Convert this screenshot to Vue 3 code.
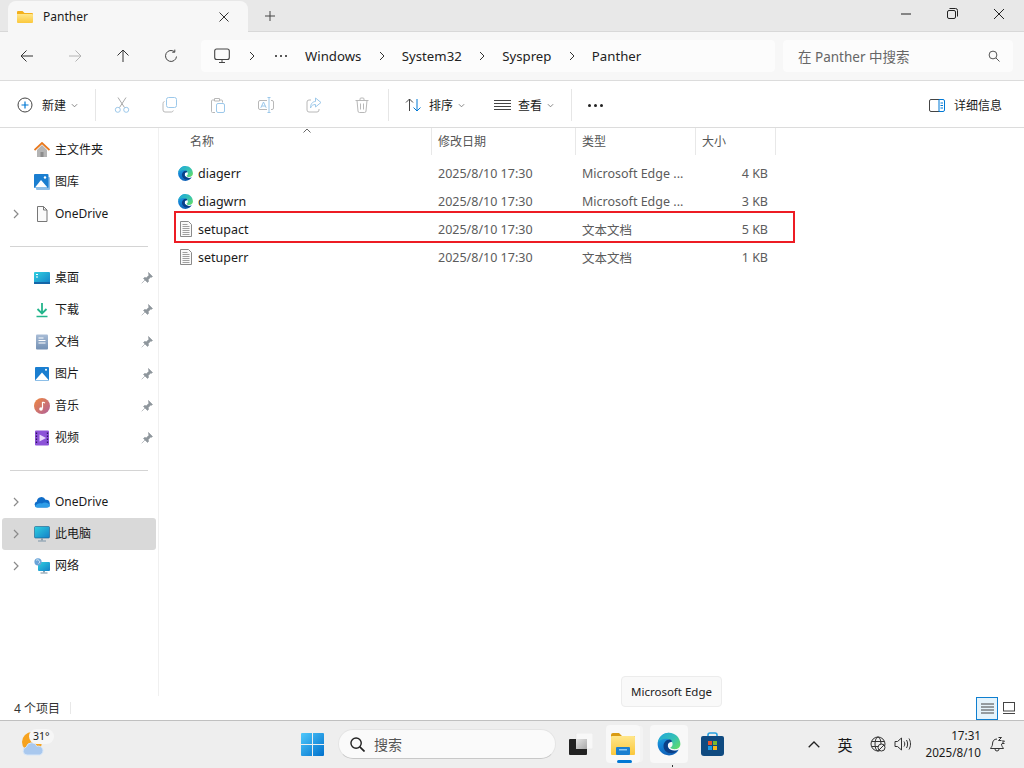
<template>
  <div class="desktop">
    <!-- shared gradients -->
    <svg class="defs" width="0" height="0">
      <defs>
        <linearGradient id="edgeBody" x1="0" y1="0" x2="0.3" y2="1">
          <stop offset="0" stop-color="#2bb3d8" />
          <stop offset="0.55" stop-color="#1483d6" />
          <stop offset="1" stop-color="#0f62b8" />
        </linearGradient>
        <linearGradient id="edgeTop" x1="0" y1="0" x2="1" y2="0.8">
          <stop offset="0" stop-color="#1fa7dc" />
          <stop offset="0.6" stop-color="#35c1b5" />
          <stop offset="1" stop-color="#5fdb6c" />
        </linearGradient>
        <linearGradient id="folderFill" x1="0" y1="0" x2="0" y2="1">
          <stop offset="0" stop-color="#ffe68a" />
          <stop offset="1" stop-color="#fbc83c" />
        </linearGradient>
        <linearGradient id="startFill" x1="0" y1="0" x2="1" y2="1">
          <stop offset="0" stop-color="#4fc8fb" />
          <stop offset="1" stop-color="#0070cc" />
        </linearGradient>
        <linearGradient id="screenFill" x1="0" y1="0" x2="1" y2="1">
          <stop offset="0" stop-color="#2fd0e0" />
          <stop offset="1" stop-color="#1480c8" />
        </linearGradient>
        <linearGradient id="musicFill" x1="0" y1="0" x2="1" y2="1">
          <stop offset="0" stop-color="#f0883c" />
          <stop offset="1" stop-color="#b0609c" />
        </linearGradient>
        <linearGradient id="docFill" x1="0" y1="0" x2="0" y2="1">
          <stop offset="0" stop-color="#a8bcd6" />
          <stop offset="1" stop-color="#7390b4" />
        </linearGradient>
        <linearGradient id="overlapFill" x1="0" y1="0" x2="1" y2="1">
          <stop offset="0" stop-color="#e4e4e4" />
          <stop offset="1" stop-color="#a8a8a8" />
        </linearGradient>
      </defs>
    </svg>

    <!-- title bar with tab -->
    <div class="titlebar">
      <div class="tab">
        <svg class="tab-folder" viewBox="0 0 16 14" width="16" height="14">
          <path d="M0 2a1 1 0 0 1 1-1h4.500l2 2H15a1 1 0 0 1 1 1v1H0z" fill="#f3b01c" />
          <path d="M0 4h15a1 1 0 0 1 1 1v7a1 1 0 0 1-1 1H1a1 1 0 0 1-1-1z" fill="url(#folderFill)" />
        </svg>
        <span class="tab-title">Panther</span>
        <svg class="tab-close" viewBox="0 0 10 10" width="10" height="10">
          <path d="M.5.5l9 9M9.500.5l-9 9" stroke="#333" fill="none" />
        </svg>
      </div>
      <svg class="tab-plus" viewBox="0 0 10 10" width="10" height="10">
        <path d="M5 0v10M0 5h10" stroke="#444" fill="none" />
      </svg>
      <div class="win-controls">
        <svg viewBox="0 0 10 10" width="10" height="10"><path d="M0 5h10" stroke="#222" fill="none" /></svg>
        <svg viewBox="0 0 11 11" width="11" height="11">
          <rect x=".5" y="2.500" width="8" height="8" rx="1.500" stroke="#222" fill="none" />
          <path d="M2.500.5h6a2 2 0 0 1 2 2v6" stroke="#222" fill="none" />
        </svg>
        <svg viewBox="0 0 10 10" width="10" height="10"><path d="M0 0l10 10M10 0L0 10" stroke="#222" fill="none" /></svg>
      </div>
    </div>

    <!-- address bar -->
    <div class="addressbar">
      <div class="nav-buttons">
        <svg viewBox="0 0 14 14" width="14" height="14"><path d="M13 7H1M6.500 1.500L1 7l5.500 5.500" stroke="#333" fill="none" /></svg>
        <svg viewBox="0 0 14 14" width="14" height="14"><path d="M1 7h12M7.500 1.500L13 7l-5.500 5.500" stroke="#b4b4b4" fill="none" /></svg>
        <svg viewBox="0 0 14 14" width="14" height="14"><path d="M7 13V1M1.500 6.500L7 1l5.500 5.500" stroke="#333" fill="none" /></svg>
        <svg viewBox="0 0 14 14" width="14" height="14"><path d="M12.500 7.500a5.500 5.500 0 1 1-2-4.800M10.800.6v2.600H8.200" stroke="#444" fill="none" /></svg>
      </div>
      <div class="breadcrumb">
        <svg class="pc-icon" viewBox="0 0 16 16" width="16" height="16">
          <rect x=".7" y="1" width="14.600" height="10.500" rx="2" stroke="#444" fill="none" stroke-width="1.100" />
          <path d="M8 11.500V14M5 14.500h6" stroke="#444" fill="none" />
        </svg>
        <span class="crumb-sep first-sep"><svg viewBox="0 0 6 10" width="6" height="10"><path d="M1 1l4 4-4 4" stroke="#333" fill="none" /></svg></span>
        <span class="crumb-dots"><i></i><i></i><i></i></span>
        <template v-for="(crumb, i) in crumbs" :key="crumb">
          <span class="crumb">{{ crumb }}</span>
          <span v-if="i < crumbs.length - 1" class="crumb-sep"><svg viewBox="0 0 6 10" width="6" height="10"><path d="M1 1l4 4-4 4" stroke="#333" fill="none" /></svg></span>
        </template>
      </div>
      <div class="searchbox">
        <span>在 Panther 中搜索</span>
        <svg viewBox="0 0 12 12" width="12" height="12">
          <circle cx="5" cy="5" r="3.900" stroke="#555" fill="none" />
          <path d="M8 8l3.500 3.500" stroke="#555" fill="none" />
        </svg>
      </div>
    </div>

    <!-- command bar -->
    <div class="toolbar">
      <div class="tool-new">
        <svg viewBox="0 0 16 16" width="16" height="16">
          <circle cx="8" cy="8" r="7" stroke="#444" fill="none" />
          <path d="M8 4.500v7M4.500 8h7" stroke="#0078d4" fill="none" stroke-width="1.200" />
        </svg>
        <span>新建</span>
        <svg class="caret" viewBox="0 0 8 5" width="7" height="5"><path d="M1 1l3 3 3-3" stroke="#777" fill="none" /></svg>
      </div>
      <div class="tool-sep"></div>
      <div class="tool-icons">
        <svg viewBox="0 0 16 16" width="16" height="16"><path d="M4 .5l6.500 10M12 .5L5.500 10.500" stroke="#a8a8a8" fill="none" /><circle cx="3.800" cy="12.800" r="2.500" stroke="#9cc8ea" fill="none" /><circle cx="12.200" cy="12.800" r="2.500" stroke="#9cc8ea" fill="none" /></svg>
        <svg viewBox="0 0 16 16" width="16" height="16"><rect x="4.500" y=".5" width="10" height="10" rx="2" stroke="#9cc8ea" fill="none" /><path d="M2.500 4.500A2 2 0 0 0 1 6.500v6.500a2 2 0 0 0 2 2h6.500a2 2 0 0 0 1.800-1.500" stroke="#b8b8b8" fill="none" /></svg>
        <svg viewBox="0 0 16 16" width="16" height="16"><path d="M4 3H2.500a1 1 0 0 0-1 1v10.500a1 1 0 0 0 1 1H5M10 3h1.500a1 1 0 0 1 1 1v1.500M4.500 1.500h5v2.500h-5z" stroke="#b8b8b8" fill="none" /><rect x="6.500" y="6.500" width="8" height="9" rx="1.500" stroke="#9cc8ea" fill="none" /></svg>
        <svg viewBox="0 0 16 16" width="16" height="16"><path d="M9 3.500H2A1.500 1.500 0 0 0 .5 5v6A1.500 1.500 0 0 0 2 12.500h7M13 3.500h1A1.500 1.500 0 0 1 15.500 5v6a1.500 1.500 0 0 1-1.500 1.500h-1" stroke="#b8b8b8" fill="none" /><path d="M11 1v14M9.500.5h3M9.500 15.500h3" stroke="#9cc8ea" fill="none" /><path d="M2.800 10.800L5.500 5l2.700 5.800M3.800 9h3.400" stroke="#9cc8ea" fill="none" /></svg>
        <svg viewBox="0 0 16 16" width="16" height="16"><path d="M5 3H3a2 2 0 0 0-2 2v8a2 2 0 0 0 2 2h8a2 2 0 0 0 2-2v-1" stroke="#b8b8b8" fill="none" /><path d="M9.500 1l5.500 4.500-5.500 4.500V7.500C7 7.500 5.500 8.500 4.500 11c0-4 2-6.500 5-6.500z" stroke="#9cc8ea" fill="none" /></svg>
        <svg viewBox="0 0 16 16" width="16" height="16"><path d="M1.500 3.500h13M6 3.500V2a1 1 0 0 1 1-1h2a1 1 0 0 1 1 1v1.500M3 3.500l1 10.500a1.500 1.500 0 0 0 1.500 1.500h5A1.500 1.500 0 0 0 12 14l1-10.500M6.500 6.500v6M9.500 6.500v6" stroke="#b8b8b8" fill="none" /></svg>
      </div>
      <div class="tool-sep"></div>
      <div class="tool-sort">
        <svg viewBox="0 0 17 14" width="17" height="14"><path d="M4.500 13V1M1 4.500L4.500 1 8 4.500" stroke="#444" fill="none" /><path d="M12 1v12M8.500 9.500L12 13l3.500-3.500" stroke="#0078d4" fill="none" /></svg>
        <span>排序</span>
        <svg class="caret" viewBox="0 0 8 5" width="7" height="5"><path d="M1 1l3 3 3-3" stroke="#777" fill="none" /></svg>
      </div>
      <div class="tool-view">
        <svg viewBox="0 0 17 12" width="17" height="12"><path d="M0 1.500h17M0 4.500h17M0 7.500h17M0 10.500h17" stroke="#444" fill="none" /></svg>
        <span>查看</span>
        <svg class="caret" viewBox="0 0 8 5" width="7" height="5"><path d="M1 1l3 3 3-3" stroke="#777" fill="none" /></svg>
      </div>
      <div class="tool-sep"></div>
      <div class="tool-more"><i></i><i></i><i></i></div>
      <div class="tool-details">
        <svg viewBox="0 0 16 13" width="16" height="13">
          <path d="M10 .5H2A1.500 1.500 0 0 0 .5 2v9A1.500 1.500 0 0 0 2 12.500h8" stroke="#444" fill="none" />
          <path d="M10 .5h4A1.500 1.500 0 0 1 15.500 2v9a1.500 1.500 0 0 1-1.500 1.500h-4zM11.500 4h2.500M11.500 6.500h2.500M11.500 9h2.500" stroke="#0078d4" fill="none" />
        </svg>
        <span>详细信息</span>
      </div>
    </div>

    <div class="main">
      <!-- navigation pane -->
      <nav class="sidebar">
        <template v-for="(item, i) in navItems" :key="i">
          <div v-if="item.divider" class="nav-divider"><div></div></div>
          <div v-else class="nav-row" :class="{ selected: item.selected }">
            <span class="nav-chevron">
              <svg v-if="item.chevron" viewBox="0 0 6 10" width="6" height="10"><path d="M1 1l4 4-4 4" stroke="#8a8a8a" fill="none" stroke-width="1.200" /></svg>
            </span>
            <svg class="nav-icon" viewBox="0 0 16 16" width="16" height="16">
              <template v-if="item.icon === 'home'">
                <path d="M3 8v7h10V8L8 3z" fill="#b4b4b4" />
                <rect x="6.500" y="10" width="3" height="5" fill="#8c8c8c" />
                <path d="M.5 8L8 1l7.500 7" stroke="#e8791e" stroke-width="1.800" fill="none" />
              </template>
              <template v-else-if="item.icon === 'gallery'">
                <rect x="2" y="3" width="14" height="13" rx="1" fill="#8fbfe8" />
                <rect x="0" y="0" width="14.500" height="14" rx="1" fill="#1a7ed0" />
                <path d="M1 13.500L7 6l6.500 7.500z" fill="#fff" />
                <circle cx="11" cy="3.500" r="1.200" fill="#fff" />
              </template>
              <template v-else-if="item.icon === 'page'">
                <path d="M3.500.5h6l3.500 3.500v11.500h-9.500z" fill="#fafafa" stroke="#777" />
                <path d="M9.500.5V4H13" fill="none" stroke="#777" />
              </template>
              <template v-else-if="item.icon === 'desktop'">
                <rect x="0" y="2" width="16" height="12" rx="1" fill="url(#screenFill)" />
                <rect x="0" y="12" width="16" height="2" fill="#1566a8" />
                <path d="M2 4.500h2M2 7h2" stroke="#fff" stroke-width="1.200" />
              </template>
              <template v-else-if="item.icon === 'download'">
                <path d="M8 1v10M3.500 7L8 11.500 12.500 7" stroke="#24b58c" stroke-width="1.800" fill="none" />
                <path d="M2.500 14.500h11" stroke="#24b58c" stroke-width="1.500" />
              </template>
              <template v-else-if="item.icon === 'doc'">
                <rect x="2" y="0.500" width="12" height="15" rx="1" fill="url(#docFill)" />
                <path d="M4.500 4h5M4.500 6.500h7M4.500 9h7" stroke="#fff" />
              </template>
              <template v-else-if="item.icon === 'pictures'">
                <rect x="1" y="1" width="14" height="14" rx="1" fill="#1a7ed0" />
                <path d="M1 14.500L8 6.500l7 8z" fill="#fff" />
                <circle cx="12" cy="3.800" r="1" fill="#fff" />
              </template>
              <template v-else-if="item.icon === 'music'">
                <circle cx="8" cy="8" r="8" fill="url(#musicFill)" />
                <path d="M8.500 4v6.500" stroke="#fff" stroke-width="1.200" />
                <circle cx="7" cy="11" r="1.800" fill="#fff" />
                <path d="M8.500 4l2.500 1" stroke="#fff" stroke-width="1.200" />
              </template>
              <template v-else-if="item.icon === 'video'">
                <rect x="1" y="0.500" width="14" height="15" rx="1" fill="#8c52d8" />
                <path d="M5.500 4.500L12 8l-6.500 3.500z" fill="#e8d8fa" />
                <path d="M2.500 2.500v11M13.500 2.500v11" stroke="#2e1560" stroke-width="1.300" stroke-dasharray="1.500 1.500" />
              </template>
              <template v-else-if="item.icon === 'cloud'">
                <path d="M3.500 13.500a3 3 0 0 1-.6-5.900A4.500 4.500 0 0 1 11.500 5.800a3.800 3.800 0 0 1 .8 7.700z" fill="#0f6cc8" />
                <path d="M1 12.500C2 10 5 8.500 8 9.500c2-1.500 6-1.500 8 2 0 1-1 2-2.500 2h-10C2 13.500 1.300 13 1 12.500z" fill="#2f9ee8" />
              </template>
              <template v-else-if="item.icon === 'pc'">
                <rect x="0.500" y="0.500" width="15" height="11.500" rx="1" fill="url(#screenFill)" stroke="#1a5d8c" stroke-width=".6" />
                <rect x="7" y="12" width="2" height="2.500" fill="#8aa0b0" />
                <path d="M4 15h8" stroke="#8aa0b0" stroke-width="1.200" />
              </template>
              <template v-else-if="item.icon === 'network'">
                <rect x="4" y="4" width="12" height="9" rx="1" fill="url(#screenFill)" />
                <rect x="9" y="13" width="2" height="1.500" fill="#8aa0b0" />
                <path d="M6.500 15h7" stroke="#8aa0b0" stroke-width="1.200" />
                <circle cx="4" cy="3.800" r="3.600" fill="#6aa4d8" />
                <path d="M2 2.500c1-1 2-1 3 0s1 2-.5 3" stroke="#d8eaf8" fill="none" />
              </template>
            </svg>
            <span class="nav-label">{{ item.label }}</span>
            <svg v-if="item.pinned" class="nav-pin" viewBox="0 0 12 12" width="12" height="12">
              <path d="M7.500.5l4 4-1 .8-.8-.2-2.400 2.400.2 2-1 1L2.500 6.500l1-1 2 .2 2.400-2.400-.2-.8zM4 8L.7 11.300" fill="#8e969c" stroke="#8e969c" stroke-width=".6" />
            </svg>
          </div>
        </template>
      </nav>

      <!-- file list -->
      <section class="files">
        <div class="file-head">
          <div class="head-cell head-name">名称</div>
          <div class="head-cell">修改日期</div>
          <div class="head-cell">类型</div>
          <div class="head-cell">大小</div>
          <svg class="sort-caret" viewBox="0 0 8 5" width="8" height="5"><path d="M.5 4.500L4 1l3.500 3.500" stroke="#666" fill="none" /></svg>
        </div>
        <div class="file-body">
          <div v-for="file in files" :key="file.name" class="file-row">
            <div class="cell-name">
              <svg v-if="file.kind === 'edge'" class="edge-file" viewBox="0 0 16 16" width="17" height="17">
                <path d="M8 1a7 7 0 0 0 0 14c2.600 0 4.900-1.400 6-3.600-1.600 1-3.600 1-5.100.2-1.400-.8-2-2.200-1.500-3.600.3-1 1.300-1.500 2.300-1.200z" fill="url(#edgeBody)" />
                <path d="M1.200 6.800C1.900 3.500 4.700 1 8 1c3.900 0 7 3.100 7 7 0 2.200-1.800 3.200-3.500 3.200-1.300 0-2.300-.4-2.800-.9 1-.5 1.500-1.300 1.500-2.300C10.200 6.400 8.600 4.800 6 4.800c-2 0-3.700.8-4.800 2z" fill="url(#edgeTop)" />
                <path d="M4.600 9.500C4.600 7 6.300 5.300 8.500 5.300c.8 0 1.200.5 1.200 1.500-1-.3-2 .2-2.300 1.200-.5 1.400.1 2.800 1.500 3.600 1.300.7 3.100.8 4.400.3-1.200 1.400-3 1.900-4.500 1.700-2.400-.3-4.200-2-4.200-4.600z" fill="#0b3f87" />
              </svg>
              <svg v-else viewBox="0 0 16 16" width="16" height="16">
                <path d="M2.500.5h8l3 3v12h-11z" fill="#fafafa" stroke="#8a8a8a" />
                <path d="M4.500 3.500h5M4.500 5.500h7M4.500 7.500h7M4.500 9.500h7M4.500 11.500h7M4.500 13.500h7" stroke="#a0a0a0" />
              </svg>
              <span>{{ file.name }}</span>
            </div>
            <div class="cell-meta">{{ file.date }}</div>
            <div class="cell-meta">{{ file.type }}</div>
            <div class="cell-meta cell-size">{{ file.size }}</div>
          </div>
          <!-- red annotation round the third row -->
          <div class="highlight"></div>
        </div>
      </section>
    </div>

    <!-- status bar -->
    <div class="statusbar">
      <span class="item-count">4 个项目</span>
      <div class="status-sep"></div>
      <div class="view-toggle">
        <div class="view-btn active">
          <svg viewBox="0 0 13 11" width="13" height="11"><path d="M0 1h13M0 4h13M0 7h13M0 10h13" stroke="#444" fill="none" /></svg>
        </div>
        <div class="view-btn">
          <svg viewBox="0 0 13 12" width="13" height="12"><rect x=".5" y=".5" width="11" height="8.500" stroke="#444" fill="none" /><path d="M0 11.500h12" stroke="#444" /></svg>
        </div>
      </div>
    </div>

    <!-- taskbar -->
    <div class="taskbar">
      <div class="weather">
        <svg viewBox="0 0 23 24" width="23" height="24">
          <circle cx="10" cy="10" r="10" fill="#f6a21e" />
          <path d="M5 23a4 4 0 0 1-.7-7.900 5.500 5.500 0 0 1 10.500-.7A4.300 4.300 0 0 1 18 23z" fill="#a9c8ee" stroke="#d6e6f8" />
        </svg>
        <span class="temp">31°</span>
      </div>
      <svg class="start" viewBox="0 0 23 23" width="23" height="23">
        <path d="M0 1a1 1 0 0 1 1-1h10v11H0zM12 0h10a1 1 0 0 1 1 1v10H12zM0 12h11v11H1a1 1 0 0 1-1-1zM12 12h11v10a1 1 0 0 1-1 1H12z" fill="url(#startFill)" />
      </svg>
      <div class="task-search">
        <svg viewBox="0 0 16 16" width="15" height="15">
          <circle cx="6.500" cy="6.500" r="5.500" stroke="#222" stroke-width="1.500" fill="none" />
          <path d="M10.500 10.500l5 5" stroke="#222" stroke-width="1.800" />
        </svg>
        <span>搜索</span>
      </div>
      <svg class="taskview" viewBox="0 0 24 22" width="24" height="22">
        <rect x="7" y="0" width="17" height="16" rx="1" fill="#f8f8f8" stroke="#e2e2e2" stroke-width=".5" />
        <rect x="0" y="6" width="18" height="16" rx="1" fill="#222" />
        <rect x="7" y="6" width="11" height="10" fill="url(#overlapFill)" />
      </svg>
      <div class="task-btn explorer">
        <svg viewBox="0 0 24 22" width="24" height="22">
          <path d="M0 2a2 2 0 0 1 2-2h6l3 3h12a1 1 0 0 1 1 1v2H0z" fill="#d99a12" />
          <rect x="0" y="3" width="24" height="19" rx="1" fill="url(#folderFill)" />
          <rect x="5" y="14" width="14" height="8" rx="1" fill="#1a7fd0" />
          <rect x="8" y="16" width="8" height="1.500" fill="#8cc8f0" />
        </svg>
        <div class="running"></div>
      </div>
      <div class="task-btn edge">
        <svg viewBox="0 0 16 16" width="26" height="26">
          <path d="M8 1a7 7 0 0 0 0 14c2.600 0 4.900-1.400 6-3.600-1.600 1-3.600 1-5.100.2-1.400-.8-2-2.200-1.500-3.600.3-1 1.300-1.500 2.300-1.200z" fill="url(#edgeBody)" />
          <path d="M1.200 6.800C1.900 3.500 4.700 1 8 1c3.900 0 7 3.100 7 7 0 2.200-1.800 3.200-3.500 3.200-1.300 0-2.300-.4-2.800-.9 1-.5 1.500-1.300 1.500-2.300C10.200 6.400 8.600 4.800 6 4.800c-2 0-3.700.8-4.800 2z" fill="url(#edgeTop)" />
          <path d="M4.600 9.500C4.600 7 6.300 5.300 8.500 5.300c.8 0 1.200.5 1.200 1.500-1-.3-2 .2-2.300 1.200-.5 1.400.1 2.800 1.500 3.600 1.300.7 3.100.8 4.400.3-1.200 1.400-3 1.900-4.500 1.700-2.400-.3-4.200-2-4.200-4.600z" fill="#0b3f87" />
        </svg>
        <div class="pointer-tip"></div>
      </div>
      <svg class="store" viewBox="0 0 23 24" width="23" height="24">
        <path d="M7 5V3a2 2 0 0 1 2-2h5a2 2 0 0 1 2 2v2" stroke="#27a0e0" stroke-width="1.600" fill="none" />
        <path d="M0 6a2 2 0 0 1 2-2h19a2 2 0 0 1 2 2v15a3 3 0 0 1-3 3H3a3 3 0 0 1-3-3z" fill="#0f4a80" />
        <rect x="7" y="9" width="4" height="4" fill="#e8532b" />
        <rect x="12" y="9" width="4" height="4" fill="#7ab82e" />
        <rect x="7" y="14" width="4" height="4" fill="#1c9ce8" />
        <rect x="12" y="14" width="4" height="4" fill="#f8b818" />
      </svg>
      <div class="tray">
        <svg class="tray-up" viewBox="0 0 12 7" width="12" height="7"><path d="M.7 6.300L6 1l5.300 5.300" stroke="#222" stroke-width="1.300" fill="none" /></svg>
        <span class="ime">英</span>
        <svg class="tray-globe" viewBox="0 0 16 16" width="16" height="16">
          <circle cx="8" cy="8" r="7" stroke="#333" fill="none" />
          <ellipse cx="8" cy="8" rx="3" ry="7" stroke="#333" fill="none" />
          <path d="M1.500 5.500h13M1.500 10.500h8" stroke="#333" fill="none" />
          <circle cx="11.500" cy="11.500" r="3.500" fill="#eee" stroke="#333" />
          <path d="M9 14l5-5" stroke="#333" />
        </svg>
        <svg class="tray-sound" viewBox="0 0 17 14" width="17" height="14">
          <path d="M1 4.500h2.500L7.500 1v12L3.500 9.500H1z" stroke="#333" fill="none" />
          <path d="M10 4.500c1 1.500 1 3.500 0 5M12.500 3c1.500 2.500 1.500 5.500 0 8M15 1.500c2 3.500 2 7.500 0 11" stroke="#333" fill="none" />
        </svg>
        <div class="clock">
          <div>17:31</div>
          <div>2025/8/10</div>
        </div>
        <svg class="tray-bell" viewBox="0 0 16 17" width="16" height="17">
          <path d="M8 3C5 3 3.500 5 3.500 8c0 2-1.200 3-2 4.500h13C13.700 11 12.500 10 12.500 8" stroke="#333" fill="none" />
          <path d="M6 13a2 2 0 0 0 4 0" stroke="#333" fill="none" />
          <path d="M9.500 1.500h3l-3 3h3M13 5h2.500L13 7.500h2.500" stroke="#333" fill="none" />
        </svg>
      </div>
    </div>

    <!-- taskbar hover tooltip -->
    <div class="tooltip">Microsoft Edge</div>
  </div>
</template>

<script setup>
const crumbs = ['Windows', 'System32', 'Sysprep', 'Panther']

const navItems = [
  { label: '主文件夹', icon: 'home' },
  { label: '图库', icon: 'gallery' },
  { label: 'OneDrive', icon: 'page', chevron: true },
  { divider: true },
  { label: '桌面', icon: 'desktop', pinned: true },
  { label: '下载', icon: 'download', pinned: true },
  { label: '文档', icon: 'doc', pinned: true },
  { label: '图片', icon: 'pictures', pinned: true },
  { label: '音乐', icon: 'music', pinned: true },
  { label: '视频', icon: 'video', pinned: true },
  { divider: true },
  { label: 'OneDrive', icon: 'cloud', chevron: true },
  { label: '此电脑', icon: 'pc', chevron: true, selected: true },
  { label: '网络', icon: 'network', chevron: true },
]

const files = [
  { name: 'diagerr', kind: 'edge', date: '2025/8/10 17:30', type: 'Microsoft Edge ...', size: '4 KB' },
  { name: 'diagwrn', kind: 'edge', date: '2025/8/10 17:30', type: 'Microsoft Edge ...', size: '3 KB' },
  { name: 'setupact', kind: 'text', date: '2025/8/10 17:30', type: '文本文档', size: '5 KB' },
  { name: 'setuperr', kind: 'text', date: '2025/8/10 17:30', type: '文本文档', size: '1 KB' },
]
</script>

<style scoped>
.desktop {
  position: relative;
  width: 1024px;
  height: 768px;
  display: flex;
  flex-direction: column;
  overflow: hidden;
  background: #fff;
  color: #1a1a1a;
  font-family: "Noto Sans", "Noto Sans CJK SC", sans-serif;
  font-size: 12.5px;
}

.defs {
  display: block;
  flex: none;
}

svg {
  display: block;
  flex: none;
}

/* title bar */
.titlebar {
  height: 32px;
  flex: none;
  display: flex;
  align-items: flex-end;
  background: #e8e8e8;
  border-bottom: 1px solid #d8d8d8;
  box-sizing: border-box;
  padding-left: 8px;
}

.tab {
  width: 240px;
  height: 31px;
  margin-bottom: -1px;
  box-sizing: border-box;
  display: flex;
  align-items: center;
  padding: 0 19px 0 9px;
  background: #f7f7f7;
  border-radius: 8px 8px 0 0;
  font-size: 12px;
}

.tab-title {
  margin-left: 10px;
  flex: 1;
}

.tab-plus {
  margin: 0 0 10px 17px;
}

.win-controls {
  margin-left: auto;
  height: 31px;
  display: flex;
  align-items: center;
  gap: 36px;
  padding: 0 20px 4px 0;
  box-sizing: border-box;
}

/* address bar */
.addressbar {
  height: 49px;
  flex: none;
  display: flex;
  align-items: center;
  background: #f7f7f7;
  border-bottom: 1px solid #dcdcdc;
  box-sizing: border-box;
  padding: 0 11px 1px 20px;
}

.nav-buttons {
  display: flex;
  gap: 34px;
  width: 181px;
  flex: none;
}

.breadcrumb {
  width: 574px;
  height: 32px;
  flex: none;
  display: flex;
  align-items: center;
  background: #fcfcfc;
  border-radius: 4px;
  box-sizing: border-box;
  padding-left: 13px;
  font-size: 13.2px;
  color: #222;
}

.crumb-sep {
  width: 40.5px;
  flex: none;
  display: flex;
  justify-content: center;
}

.first-sep {
  width: 44px;
}

.crumb-dots {
  width: 31px;
  flex: none;
  display: flex;
  gap: 3px;
  padding-left: 1px;
  box-sizing: border-box;
}

.crumb-dots i {
  width: 2px;
  height: 2px;
  background: #222;
  border-radius: 50%;
}

.searchbox {
  width: 230px;
  height: 32px;
  margin-left: 8px;
  flex: none;
  display: flex;
  align-items: center;
  justify-content: space-between;
  background: #fcfcfc;
  border-radius: 4px;
  box-sizing: border-box;
  padding: 0 13px 0 15px;
  font-size: 13.5px;
  color: #666;
}

/* command bar */
.toolbar {
  height: 47px;
  flex: none;
  display: flex;
  align-items: center;
  background: #fff;
  border-bottom: 1px solid #dcdcdc;
  box-sizing: border-box;
  padding: 2px 0 0 17px;
}

.tool-new,
.tool-sort,
.tool-view,
.tool-details {
  display: flex;
  align-items: center;
}

.tool-new span,
.tool-sort span,
.tool-view span,
.tool-details span {
  font-size: 12px;
  margin-left: 9px;
}

.caret {
  margin-left: 5px;
}

.tool-new {
  width: 78px;
  flex: none;
}

.tool-sep {
  width: 1px;
  height: 32px;
  flex: none;
  background: #e6e6e6;
}

.tool-icons {
  width: 292px;
  flex: none;
  box-sizing: border-box;
  padding-left: 18px;
  display: flex;
  gap: 32px;
}

.tool-sort {
  width: 105px;
  flex: none;
  padding-left: 16px;
  box-sizing: border-box;
}

.tool-sort span {
  margin-left: 7px;
}

.tool-view {
  width: 77px;
  flex: none;
}

.tool-view span {
  margin-left: 7px;
}

.tool-more {
  margin-left: 16px;
  display: flex;
  gap: 3px;
}

.tool-more i {
  width: 3px;
  height: 3px;
  border-radius: 50%;
  background: #222;
}

.tool-details {
  margin-left: auto;
  padding-right: 22px;
}

/* main */
.main {
  flex: 1;
  min-height: 0;
  display: flex;
}

.sidebar {
  width: 159px;
  flex: none;
  box-sizing: border-box;
  border-right: 1px solid #f0f0f0;
  padding: 6px 2px 0;
}

.nav-row {
  height: 32px;
  display: flex;
  align-items: center;
  border-radius: 3px;
  padding-right: 3px;
  font-size: 12px;
}

.nav-row.selected {
  background: #d9d9d9;
}

.nav-chevron {
  width: 32px;
  flex: none;
  display: flex;
  justify-content: center;
  padding-right: 4px;
  box-sizing: border-box;
}

.nav-label {
  margin-left: 5px;
  padding-bottom: 2px;
  flex: 1;
}

.nav-divider {
  height: 32px;
  display: flex;
  align-items: center;
  padding: 0 8px;
}

.nav-divider div {
  width: 100%;
  height: 1px;
  background: #d4d4d4;
}

.files {
  flex: 1;
  min-width: 0;
}

.file-head {
  position: relative;
  height: 27px;
  display: grid;
  grid-template-columns: 273px 144px 120px 80px;
  font-size: 12px;
  color: #555;
}

.head-cell {
  display: flex;
  align-items: center;
  padding: 0 0 2px 6px;
  border-right: 1px solid #e8e8e8;
}

.head-name {
  padding-left: 31px;
}

.sort-caret {
  position: absolute;
  left: 144px;
  top: 0;
}

.file-body {
  position: relative;
  padding-top: 4px;
}

.file-row {
  height: 28px;
  display: grid;
  grid-template-columns: 272px 144px 120px 80px;
  align-items: center;
}

.cell-name {
  display: flex;
  align-items: center;
  gap: 4px;
  padding-left: 19px;
}

.edge-file {
  margin-left: -1px;
}

.cell-meta {
  padding-left: 7px;
  color: #5c5c5c;
  white-space: nowrap;
  overflow: hidden;
}

.cell-size {
  text-align: right;
  padding-right: 7px;
}

.highlight {
  position: absolute;
  left: 15px;
  top: 56px;
  width: 621px;
  height: 32px;
  box-sizing: border-box;
  border: 2px solid #ed1c24;
}

/* status bar */
.statusbar {
  height: 24px;
  flex: none;
  display: flex;
  align-items: center;
  padding-left: 14px;
  font-size: 12px;
  color: #333;
}

.status-sep {
  width: 1px;
  height: 12px;
  margin-left: 10px;
  background: #e8e8e8;
}

.view-toggle {
  margin-left: auto;
  display: flex;
  align-items: center;
  padding-right: 4px;
}

.view-btn {
  width: 22px;
  height: 23px;
  display: flex;
  align-items: center;
  justify-content: center;
  box-sizing: border-box;
}

.view-btn.active {
  background: #e5f3fb;
  border: 1px solid #0f7fd0;
}

/* taskbar */
.taskbar {
  position: relative;
  height: 48px;
  flex: none;
  display: flex;
  align-items: center;
  background: #eeeeee;
  border-top: 1px solid #c0c0c0;
  box-sizing: border-box;
  padding: 0 0 1px 22px;
}

.weather {
  position: relative;
  width: 23px;
  height: 30px;
  flex: none;
  display: flex;
  align-items: flex-end;
  padding-bottom: 3px;
  box-sizing: border-box;
}

.temp {
  position: absolute;
  left: 7px;
  top: 0;
  padding: 0 4px;
  border-radius: 8px;
  background: #f6f6f6;
  font-size: 10.5px;
  line-height: 15px;
  white-space: nowrap;
}

.start {
  margin-left: 256px;
}

.task-search {
  width: 218px;
  height: 30px;
  margin-left: 14px;
  flex: none;
  display: flex;
  align-items: center;
  gap: 9px;
  box-sizing: border-box;
  padding-left: 11px;
  background: #fafafa;
  border: 1px solid #e4e4e4;
  border-bottom-color: #c8c8c8;
  border-radius: 15px;
  font-size: 14px;
  color: #555;
}

.taskview {
  margin-left: 13px;
}

.task-btn {
  position: relative;
  height: 38px;
  flex: none;
  box-sizing: border-box;
  display: flex;
  align-items: center;
  justify-content: center;
  background: #f8f8f8;
  border-radius: 4px;
}

.explorer {
  width: 34px;
  margin-left: 13px;
  box-shadow: 4px 0 0 -1px #f3f3f3;
}

.running {
  position: absolute;
  left: 11px;
  bottom: 0;
  width: 15px;
  height: 3px;
  border-radius: 2px;
  background: #0078d4;
}

.edge {
  width: 38px;
  margin-left: 10px;
}

.pointer-tip {
  position: absolute;
  left: 22px;
  bottom: -4px;
  width: 1px;
  height: 2px;
  background: #333;
}

.store {
  margin-left: 13px;
}

.tray {
  margin-left: auto;
  display: flex;
  align-items: center;
}

.tray-up {
  margin-right: 17px;
}

.ime {
  font-size: 15px;
  margin-right: 17px;
}

.tray-sound {
  margin-left: 8px;
}

.clock {
  margin-left: 15px;
  text-align: right;
  font-size: 11.7px;
  line-height: 17px;
}

.tray-bell {
  margin: 0 19px 0 8px;
}

.tooltip {
  position: absolute;
  left: 621px;
  top: 676px;
  width: 101px;
  height: 31px;
  box-sizing: border-box;
  display: flex;
  align-items: center;
  justify-content: center;
  background: #f9f9f9;
  border: 1px solid #ececec;
  border-radius: 4px;
  font-size: 11.5px;
  color: #222;
}
</style>
